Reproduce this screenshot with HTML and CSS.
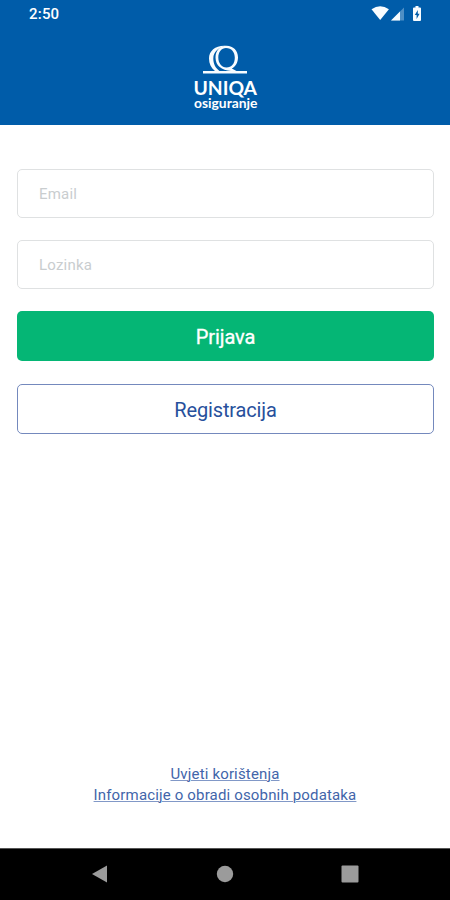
FILE: index.html
```html
<!DOCTYPE html>
<html lang="hr">
<head>
<meta charset="utf-8">
<title>UNIQA osiguranje</title>
<link rel="stylesheet" href="styles.css">
</head>
<body>
<div class="screen">
  <header class="header">
    <div class="status">
      <span class="time">2:50</span>
      <svg class="status-icons" width="52" height="16" viewBox="0 0 52 16">
        <path class="fill" d="M.5 3.2Q9.200-2.800 17.900 3.200L9.200 14Z"/>
        <path class="dim" d="M20 14.500 33 1.500V14.500Z"/>
        <path class="fill" d="M20 14.500 29 5.500V14.500Z"/>
        <path class="fill" d="M43 1.500h1.500V0h3v1.500H49q1 0 1 1V14q0 1-1 1h-6q-1 0-1-1V2.500q0-1 1-1Z"/>
        <path class="bolt" d="m46.800 4-3 4.900h1.800V13l3-5.200h-1.800Z"/>
      </svg>
    </div>
    <svg class="logo" width="70" height="72" viewBox="0 0 70 72">
      <path class="fill" d="M36 5.800C26 5 19 10.500 19 18.500C19 23.500 21 28 25 31H29.500C25.500 28 23.300 24 23.300 18.500C23.300 12 28.500 7.300 36 5.800Z"/>
      <path class="fill" fill-rule="evenodd" d="M36.500 5.800C43.300 5.800 48 10.800 48 17.500C48 22.500 45.500 26.500 41.800 28.500L46.500 31H57V33.500H13V31H41C31.500 30.500 25.500 25.500 25.500 17.500C25.500 10.500 30 5.800 36.500 5.800ZM36 8C31.500 8 28.300 12 28.300 17.500C28.300 23 31.500 27.500 36.500 27.500C41.500 27.500 44.800 23.500 44.800 17.700C44.800 12 41.500 8 36 8Z"/>
      <text class="brand" x="3.500" y="54.500" textLength="63.500" lengthAdjust="spacingAndGlyphs">UNIQA</text>
      <text class="sub" x="4" y="68" textLength="63.500" lengthAdjust="spacingAndGlyphs">osiguranje</text>
    </svg>
  </header>
  <main class="form">
    <input class="field" type="text" placeholder="Email">
    <input class="field" type="password" placeholder="Lozinka">
    <button class="btn primary">Prijava</button>
    <button class="btn outline">Registracija</button>
  </main>
  <footer class="links">
    <a class="terms">Uvjeti korištenja</a>
    <a class="privacy">Informacije o obradi osobnih podataka</a>
  </footer>
  <nav class="navbar">
    <svg width="18" height="18" viewBox="0 0 18 18"><path d="M1 9 16 .5V17.500Z"/></svg>
    <svg width="18" height="18" viewBox="0 0 18 18"><circle cx="9" cy="9" r="8.200"/></svg>
    <svg width="18" height="18" viewBox="0 0 18 18"><rect x=".5" y=".5" width="17" height="17" rx="1"/></svg>
  </nav>
</div>
</body>
</html>
```
FILE: styles.css
```css
* { box-sizing: border-box; }
body { margin: 0; font-family: Roboto, sans-serif; background: #fff; }
.screen { height: 900px; display: flex; flex-direction: column; }
.header {
  height: 125px;
  background: #005ca9;
  display: flex;
  flex-direction: column;
  align-items: center;
}
.status {
  width: 100%;
  height: 28px;
  padding: 0 27px 0 29px;
  display: flex;
  justify-content: space-between;
  align-items: center;
}
.time { color: #fff; font-size: 15px; font-weight: 500; letter-spacing: .2px; line-height: 28px; }
.status-icons { margin-bottom: 1px; }
.fill { fill: #f8fcff; }
.dim { fill: #4f8fc5; }
.bolt { fill: #005ca9; }
.logo { margin-top: 12px; }
.brand { fill: #fff; font: 700 18px Lato, sans-serif; }
.sub { fill: #fff; font: 700 13px Lato, sans-serif; }
.form { padding: 44px 16px 0 17px; display: flex; flex-direction: column; }
.field {
  height: 49px;
  margin: 0 0 22px;
  padding: 0 21px;
  border: 1px solid #dfe1e2;
  border-radius: 5px;
  background: #fff;
  font: 400 15px Roboto, sans-serif;
  letter-spacing: .2px;
  outline: none;
}
.field::placeholder { color: #c9cdcf; opacity: 1; }
.btn {
  height: 50px;
  padding: 0;
  border-radius: 5px;
  font: 400 20px Roboto, sans-serif;
}
.primary { margin-bottom: 23px; border: 0; background: #05b675; color: #fff; letter-spacing: -.1px; -webkit-text-stroke: .3px #fff; padding-top: 2px; }
.outline { border: 1px solid #7489bd; background: #fff; color: #27509c; letter-spacing: -.15px; padding-top: 1px; }
.links {
  margin-top: auto;
  margin-bottom: 42px;
  display: flex;
  flex-direction: column;
  align-items: center;
  color: #4265aa;
  font-size: 15px;
  letter-spacing: .16px;
  line-height: 21px;
}
.links a { text-decoration: underline; text-decoration-color: #8198c7; text-decoration-thickness: 1px; text-underline-offset: 1px; }
.navbar {
  height: 52px;
  border-top: 1px solid #555;
  background: #000;
  display: flex;
  justify-content: space-between;
  align-items: center;
  padding: 0 91px 2px;
}
.navbar svg { fill: #9b9b9b; }
```
